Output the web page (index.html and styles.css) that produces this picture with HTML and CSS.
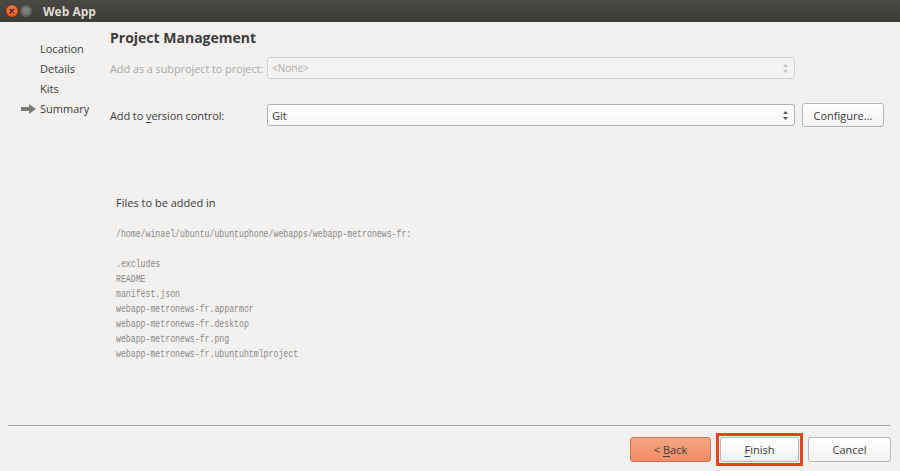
FILE: index.html
```html
<!DOCTYPE html>
<html>
<head>
<meta charset="utf-8">
<title>Web App</title>
<link rel="stylesheet" href="styles.css">
</head>
<body>
<div class="window">
  <div class="titlebar">
    <span class="wbtn close"><svg width="12" height="12" viewBox="0 0 12 12"><path d="M4.3 4.3 L7.7 7.7 M7.7 4.3 L4.3 7.7" stroke="#4a1a08" stroke-width="1.3" stroke-linecap="round"/></svg></span>
    <span class="wbtn min"></span>
    <span class="wtitle">Web App</span>
  </div>
  <div class="body">
    <nav class="sidebar">
      <div class="step">Location</div>
      <div class="step">Details</div>
      <div class="step">Kits</div>
      <div class="step current"><svg class="arrow" width="15" height="10" viewBox="0 0 15 10"><path d="M0 3 H8 V0 L15 5 L8 10 V7 H0 Z" fill="#7d7b78"/></svg>Summary</div>
    </nav>
    <main class="content">
      <h1 class="heading">Project Management</h1>
      <div class="row disabled">
        <label class="lbl">Add as a subproject to project:</label>
        <div class="combo"><span>&lt;None&gt;</span><svg class="spin" width="7" height="11" viewBox="0 0 7 11"><path d="M3.5 1 L6 4 H1 Z M3.5 10 L6 7 H1 Z" fill="#c6c4c1"/></svg></div>
      </div>
      <div class="row row2">
        <label class="lbl">Add to <u>v</u>ersion control:</label>
        <div class="combo"><span>Git</span><svg class="spin" width="7" height="11" viewBox="0 0 7 11"><path d="M3.5 1 L6 4 H1 Z M3.5 10 L6 7 H1 Z" fill="#5a5855"/></svg></div>
        <button class="btn configure">Configure...</button>
      </div>
      <div class="summary">
        <p class="files-title">Files to be added in</p>
        <pre class="files">/home/winael/ubuntu/ubuntuphone/webapps/webapp-metronews-fr:

.excludes
README
manifest.json
webapp-metronews-fr.apparmor
webapp-metronews-fr.desktop
webapp-metronews-fr.png
webapp-metronews-fr.ubuntuhtmlproject</pre>
      </div>
    </main>
  </div>
  <footer class="footer">
    <div class="sep"></div>
    <div class="buttons">
      <button class="btn back">&lt; <u>B</u>ack</button>
      <span class="focus"><button class="btn finish"><u>F</u>inish</button></span>
      <button class="btn cancel">Cancel</button>
    </div>
  </footer>
</div>
</body>
</html>
```

FILE: styles.css
```css
* { box-sizing: border-box; }
html, body { margin: 0; padding: 0; }
body {
  width: 900px;
  height: 471px;
  overflow: hidden;
  background: #f2f1f0;
  font-family: "Open Sans", "DejaVu Sans", sans-serif;
  font-size: 11px;
  color: #3c3c3c;
}
.window {
  display: flex;
  flex-direction: column;
  height: 471px;
}
.titlebar {
  height: 22px;
  flex: none;
  display: flex;
  align-items: center;
  background: linear-gradient(#4a4844, #3e3c38);
  padding-left: 6px;
}
.wbtn {
  width: 12px;
  height: 12px;
  border-radius: 50%;
  display: inline-block;
  margin-right: 2px;
}
.wbtn svg { display: block; }
.close {
  background: radial-gradient(circle at 50% 35%, #f58a5c, #e5531d 70%, #c9400f);
  box-shadow: 0 0 0 0.5px #3a1a0c;
}
.min {
  background: radial-gradient(circle at 50% 40%, #8a8883, #6c6a66 70%);
  box-shadow: inset 0 0 0 1.5px #5a5854;
}
.wtitle {
  margin-left: 9px;
  font-weight: bold;
  font-size: 12px;
  color: #dfdbd2;
}
.body {
  flex: 1;
  display: flex;
}
.sidebar {
  width: 110px;
  flex: none;
  padding-top: 17px;
  padding-left: 40px;
}
.step {
  height: 20px;
  line-height: 20px;
  position: relative;
  font-size: 11px;
  color: #3c3c3c;
}
.arrow {
  position: absolute;
  left: -19px;
  top: 5px;
}
.content {
  flex: 1;
  padding: 6px 16px 0 0;
}
.heading {
  margin: 0;
  height: 20px;
  line-height: 20px;
  font-size: 14px;
  font-weight: bold;
  color: #3c3c3c;
}
.row {
  display: flex;
  align-items: center;
  height: 24px;
  margin-top: 8px;
}
.row2 { margin-top: 23px; }
.lbl {
  width: 157px;
  flex: none;
  font-size: 11px;
  letter-spacing: -0.1px;
}
.lbl u { text-decoration-thickness: 1px; text-underline-offset: 2px; }
.combo {
  width: 528px;
  height: 22px;
  border: 1px solid #b3b0ab;
  border-radius: 3px;
  background: linear-gradient(#ffffff, #f8f7f6);
  display: flex;
  align-items: center;
  justify-content: space-between;
  padding: 0 5px 0 4px;
  font-size: 11px;
  color: #3c3c3c;
}
.disabled .lbl { color: #acaaa7; }
.disabled .combo {
  border-color: #d3d0cc;
  background: #f4f3f2;
  color: #acaaa7;
  font-size: 10px;
}
.btn {
  font-family: "Open Sans", "DejaVu Sans", sans-serif;
  font-size: 11px;
  color: #3c3c3c;
  border: 1px solid #bab7b2;
  border-radius: 3px;
  background: linear-gradient(#ffffff, #f3f2f1);
  padding: 0;
  height: 25px;
}
.btn u { text-decoration-thickness: 1px; text-underline-offset: 2px; }
.configure {
  margin-left: 7px;
  width: 82px;
  height: 24px;
}
.summary {
  padding-left: 6px;
  margin-top: 66px;
}
.files-title {
  margin: 0;
  height: 20px;
  line-height: 20px;
  font-size: 11px;
}
.files {
  margin: 14px 0 0;
  font-family: "Liberation Mono", "Courier New", monospace;
  font-size: 10px;
  line-height: 15px;
  color: #8a8886;
  transform: scaleX(0.82);
  transform-origin: 0 0;
}
.footer {
  flex: none;
  height: 46px;
}
.sep {
  margin: 0 10px 0 8px;
  border-bottom: 1px solid #f8f8f7;
  height: 2px;
  background: #a5a29e;
  background-clip: content-box;
}
.buttons {
  display: flex;
  justify-content: flex-end;
  align-items: center;
  padding-right: 9px;
  margin-top: 6px;
}
.back {
  width: 81px;
  background: linear-gradient(#f6a584, #f08c64);
  border-color: #d1734f;
  color: #3c3c3c;
}
.focus {
  margin-left: 5px;
  border: 3px solid #e0461a;
  padding: 1px;
  display: flex;
}
.finish {
  width: 79px;
}
.cancel {
  margin-left: 5px;
  width: 83px;
}
```
